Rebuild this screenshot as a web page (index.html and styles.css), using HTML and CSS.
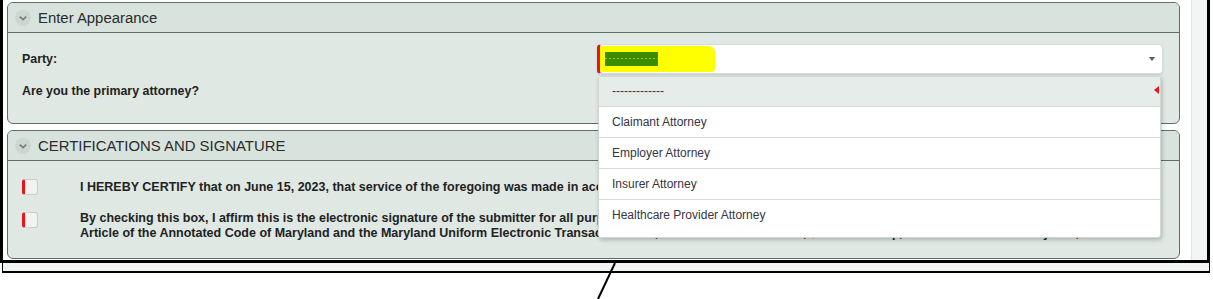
FILE: index.html
```html
<!DOCTYPE html>
<html lang="en">
<head>
<meta charset="utf-8">
<title>Enter Appearance</title>
<link rel="stylesheet" href="styles.css">
</head>
<body>
<div class="frame">
  <div class="main">
    <section class="panel p1">
      <div class="panel-head">
        <svg class="chev" width="16" height="16" viewBox="0 0 16 16"><circle cx="8" cy="8" r="8" fill="#cdd7d1"/><polyline points="4.8,6.6 8,9.6 11.2,6.6" fill="none" stroke="#7b7f7d" stroke-width="1.8"/></svg>
        <span class="title">Enter Appearance</span>
      </div>
      <div class="panel-body">
        <div class="row row-party">
          <label class="lbl">Party:</label>
          <div class="select">
            <div class="redact"><div class="redact-text"></div></div>
            <span class="caret"></span>
            <ul class="menu">
              <li class="opt active">-------------<span class="mark"></span></li>
              <li class="opt">Claimant Attorney</li>
              <li class="opt">Employer Attorney</li>
              <li class="opt">Insurer Attorney</li>
              <li class="opt">Healthcare Provider Attorney</li>
            </ul>
          </div>
        </div>
        <div class="row row-primary">
          <label class="lbl">Are you the primary attorney?</label>
        </div>
      </div>
    </section>
    <section class="panel p2">
      <div class="panel-head">
        <svg class="chev" width="16" height="16" viewBox="0 0 16 16"><circle cx="8" cy="8" r="8" fill="#cdd7d1"/><polyline points="4.8,6.6 8,9.6 11.2,6.6" fill="none" stroke="#7b7f7d" stroke-width="1.8"/></svg>
        <span class="title">CERTIFICATIONS AND SIGNATURE</span>
      </div>
      <div class="panel-body body2">
        <div class="cert cert1">
          <span class="check"></span>
          <p class="cert-text">I HEREBY CERTIFY that on June 15, 2023, that service of the foregoing was made in accordance with COMAR 14.09.01 to all parties.</p>
        </div>
        <div class="cert cert2">
          <span class="check"></span>
          <p class="cert-text">By checking this box, I affirm this is the electronic signature of the submitter for all purposes pursuant to Title 9 of the Labor and Employment<br>Article of the Annotated Code of Maryland and the Maryland Uniform Electronic Transactions Act, Commercial Law Article, §21-101 et seq., Annotated Code of Maryland, as amended.</p>
        </div>
      </div>
    </section>
  </div>
  <div class="gutter"></div>
  <div class="scroll"></div>
</div>
<div class="under"></div>
<svg class="pointer" width="1213" height="299" viewBox="0 0 1213 299"><line x1="615" y1="263" x2="598" y2="299" stroke="#000" stroke-width="2"/></svg>
</body>
</html>
```
FILE: styles.css
```css
* { box-sizing: border-box; }

body {
  margin: 0;
  width: 1213px;
  height: 299px;
  overflow: hidden;
  position: relative;
  background: #fff;
  font-family: "Liberation Sans", Arial, sans-serif;
  color: #222;
}

.frame {
  width: 1210px;
  height: 263px;
  border: 3px solid #000;
  border-top: 0;
  display: flex;
  background: #fff;
}

.main {
  width: 1177px;
  padding: 2px 0 0 4px;
  display: flex;
  flex-direction: column;
  gap: 6px;
}

.gutter {
  width: 12px;
  border-right: 1px solid #dfe4e1;
}

.scroll {
  flex: 1;
  background: #f3f5f4;
}

.under {
  margin-left: 2px;
  width: 1208px;
  height: 10px;
  background: #f2f4f3;
  border: 1px solid #000;
  border-top: 0;
  border-bottom-width: 2px;
}

.pointer {
  position: absolute;
  left: 0;
  top: 0;
  pointer-events: none;
}

.panel {
  border: 1px solid #5e6e66;
  border-radius: 6px;
  background: #e0e8e3;
}

.p1 { height: 122px; }
.p2 { height: 129px; }

.panel-head {
  height: 30px;
  border-bottom: 1px solid #5e6e66;
  background: #d9e3dd;
  border-radius: 5px 5px 0 0;
  display: flex;
  align-items: center;
  padding-left: 7px;
  gap: 7px;
}

.chev { display: block; flex: none; }

.title {
  font-size: 14.9px;
  color: #2b2b2b;
}

.panel-body {
  padding: 11px 16px 0 14px;
}

.row {
  display: grid;
  grid-template-columns: 575px 1fr;
  align-items: center;
}

.row-party { height: 30px; }

.row-primary {
  margin-top: 9px;
  height: 16px;
}

.lbl {
  font-size: 12.4px;
  font-weight: bold;
  color: #222;
}

.select {
  position: relative;
  height: 30px;
  background: #fff;
  border: 1px solid #d6ddd9;
  border-left: 3px solid #e8141b;
  border-radius: 4px;
  box-shadow: 0 1px 2px rgba(0, 0, 0, 0.12);
  display: flex;
  align-items: center;
}

.redact {
  width: 115px;
  height: 26px;
  background: #ffff00;
  border-radius: 2px 6px 4px 3px;
  padding: 6px 0 0 5px;
}

.redact-text {
  width: 53px;
  height: 14px;
  background: #3b8c00;
  border-top: 6px solid #3b8c00;
  border-bottom: 6px solid #3b8c00;
  background-image: linear-gradient(90deg, #9dbd4a 50%, transparent 50%);
  background-size: 4px 1px;
  background-repeat: repeat-x;
  background-position: 0 0;
}

.caret {
  margin-left: auto;
  margin-right: 7px;
  width: 0;
  height: 0;
  border-left: 3px solid transparent;
  border-right: 3px solid transparent;
  border-top: 4px solid #555;
}

.menu {
  position: absolute;
  left: -2px;
  top: 31px;
  width: 563px;
  margin: 0;
  padding: 0 0 6px;
  list-style: none;
  background: #fff;
  border: 1px solid #cfd8d3;
  border-radius: 3px;
  box-shadow: 1px 2px 4px rgba(0, 0, 0, 0.22);
  z-index: 10;
}

.opt {
  position: relative;
  height: 31px;
  line-height: 30px;
  padding-left: 13px;
  font-size: 12px;
  color: #353542;
  border-bottom: 1px solid #d3dcd7;
}

.opt:last-child { border-bottom: 0; }

.opt.active {
  height: 30px;
  line-height: 29px;
  background: #e6ecea;
}

.mark {
  position: absolute;
  right: 1px;
  top: 9px;
  width: 0;
  height: 0;
  border-top: 4px solid transparent;
  border-bottom: 4px solid transparent;
  border-right: 5px solid #e8141b;
}

.body2 {
  padding-top: 18px;
}

.cert {
  display: grid;
  grid-template-columns: 58px 1fr;
}

.cert1 { align-items: center; }

.cert2 {
  margin-top: 16px;
  align-items: start;
}

.check {
  display: block;
  width: 16px;
  height: 16px;
  background: #f1f2f1;
  border: 1px solid #c9cdcb;
  border-left: 3px solid #e8141b;
  border-radius: 3px;
}

.cert2 .check { margin-top: 1px; }

.cert-text {
  margin: 0;
  font-size: 12.5px;
  font-weight: bold;
  line-height: 15px;
  color: #222;
  white-space: nowrap;
}
```
